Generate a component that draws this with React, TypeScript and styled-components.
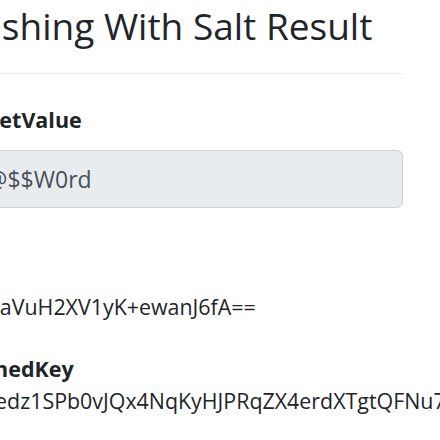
import React from 'react';
import styled, { createGlobalStyle } from 'styled-components';

const GlobalStyle = createGlobalStyle`
  html, body {
    margin: 0;
    padding: 0;
    background: #ffffff;
    overflow: hidden;
  }
  body {
    font-family: "Open Sans", "Noto Sans", sans-serif;
    color: #212529;
  }
`;

const Viewport = styled.div`
  width: 440px;
  height: 440px;
  overflow: hidden;
`;

const Column = styled.main`
  margin-left: -46px;
  width: 449px;
  padding-top: 3.5px;
`;

const Title = styled.h1`
  margin: 0;
  font-size: 37px;
  font-weight: 400;
  line-height: 1.2;
  color: #212529;
  white-space: nowrap;
`;

const Rule = styled.hr`
  margin: 25px 0 0 0;
  border: 0;
  border-top: 1.5px solid #ececec;
`;

const Field = styled.section<{ $gap: number }>`
  margin-top: ${p => p.$gap}px;
`;

const Label = styled.label`
  display: block;
  font-size: 21.5px;
  font-weight: 700;
  line-height: 36px;
  white-space: nowrap;
`;

const ReadOnlyInput = styled.input`
  display: block;
  box-sizing: border-box;
  width: 100%;
  height: 58px;
  margin-top: 12px;
  padding: 0 18px;
  font-family: inherit;
  font-size: 23px;
  color: #495057;
  background: #e9ecef;
  border: 1.5px solid #ced4da;
  border-radius: 6px;
  outline: none;
`;

const Value = styled.div<{ $gap: number }>`
  margin-top: ${p => p.$gap}px;
  font-size: 21.4px;
  line-height: 36px;
  white-space: nowrap;
`;

const result = {
  secretValue: 'P@$$W0rd',
  salt: 'NQuaVuH2XV1yK+ewanJ6fA==',
  hashedKey: 'rMqedz1SPb0vJQx4NqKyHJPRqZX4erdXTgtQFNu7c2Y=',
};

export default function App() {
  return (
    <>
      <GlobalStyle />
      <Viewport>
        <Column>
          <Title>Hashing With Salt Result</Title>
          <Rule />
          <Field $gap={28}>
            <Label>SecretValue</Label>
            <ReadOnlyInput readOnly value={result.secretValue} />
          </Field>
          <Field $gap={24}>
            <Label>Salt</Label>
            <Value $gap={21}>{result.salt}</Value>
          </Field>
          <Field $gap={26}>
            <Label>HashedKey</Label>
            <Value $gap={-4}>{result.hashedKey}</Value>
          </Field>
        </Column>
      </Viewport>
    </>
  );
}
